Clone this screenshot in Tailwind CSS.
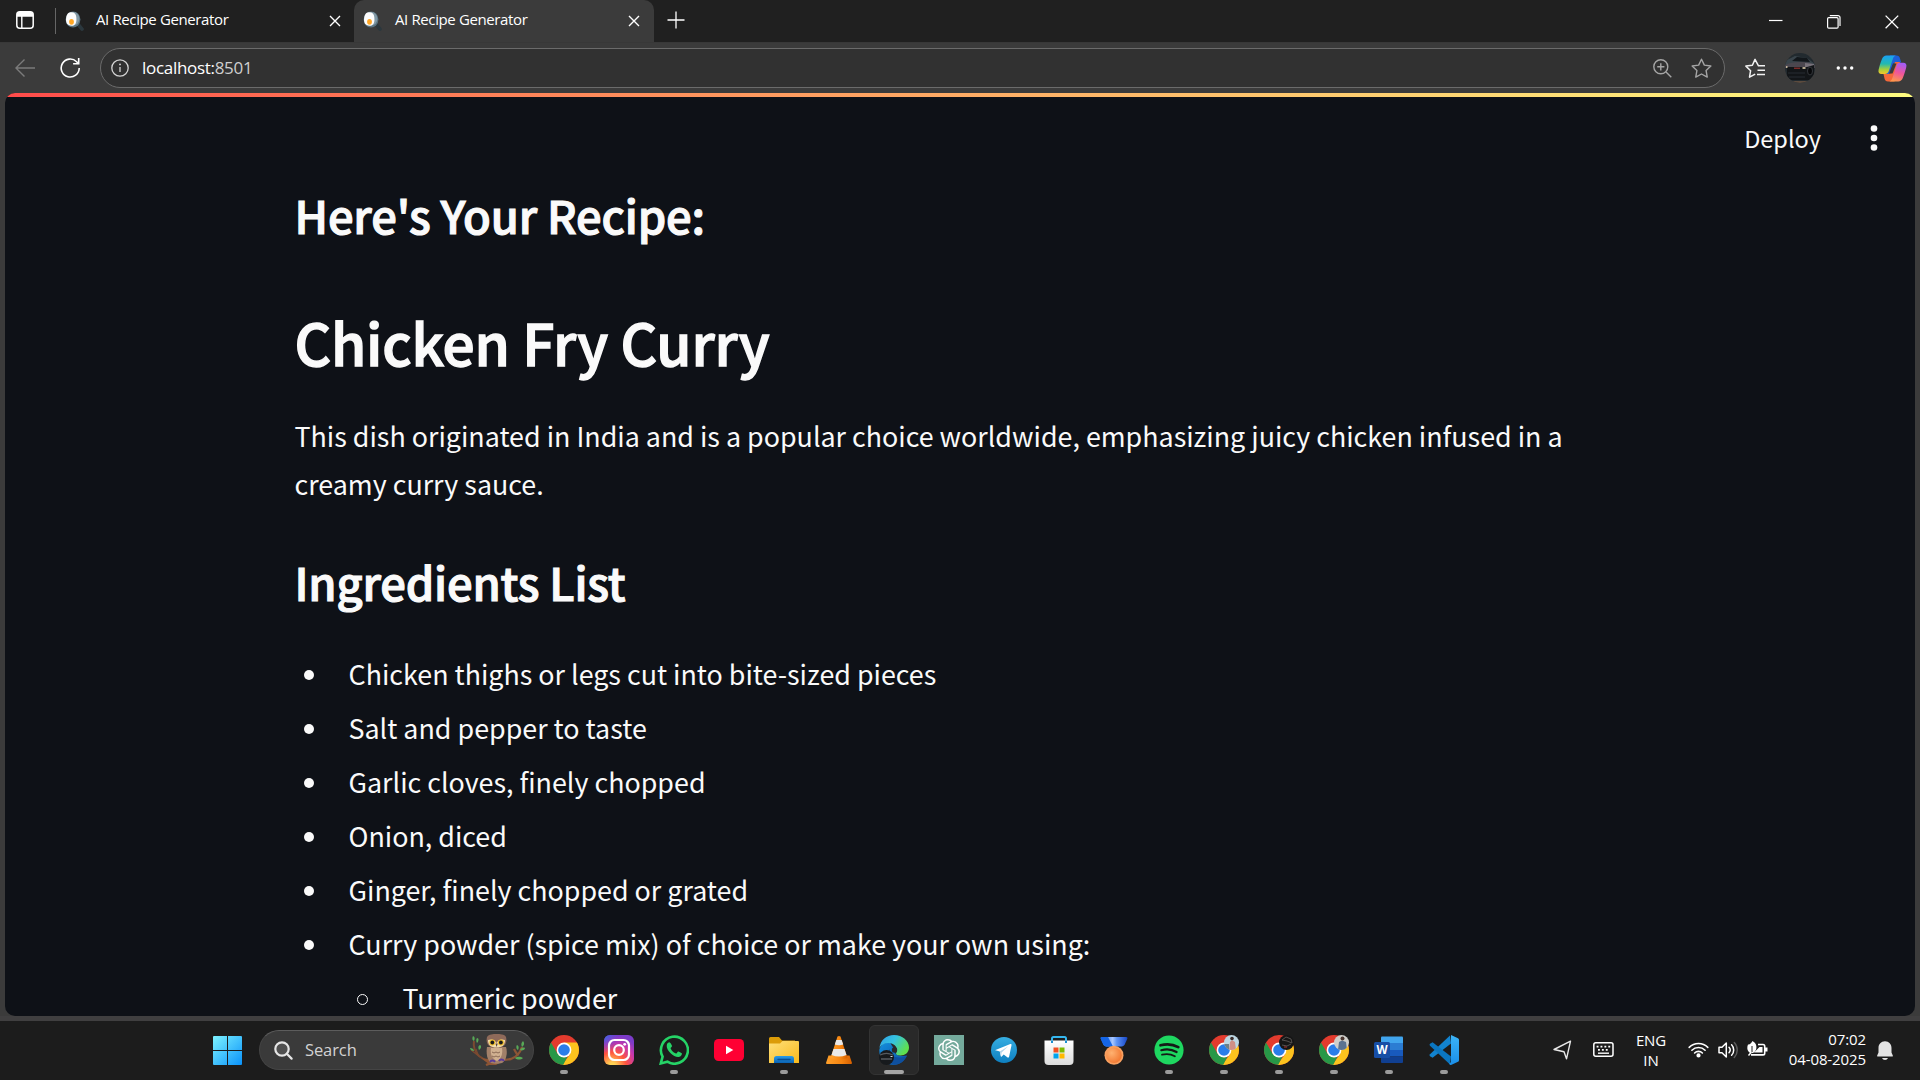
<!DOCTYPE html>
<html lang="en">
<head>
<meta charset="utf-8">
<title>AI Recipe Generator</title>
<script src="https://cdn.jsdelivr.net/npm/@tailwindcss/browser@4"></script>
</head>
<body class="h-[1080px] w-[1920px] overflow-hidden bg-[#3b3b3b] font-['Open_Sans','Noto_Sans',sans-serif] text-white">

<svg class="absolute h-0 w-0" aria-hidden="true">
  <defs>
    <linearGradient id="gWin" x1="0" y1="0" x2="1" y2="1"><stop offset="0" stop-color="#7df3ff"/><stop offset="1" stop-color="#0a92fa"/></linearGradient>
    <radialGradient id="gInsta" cx=".27" cy="1.05" r="1.05"><stop offset="0" stop-color="#ffdd55"/><stop offset=".12" stop-color="#ffd054"/><stop offset=".45" stop-color="#ff543e"/><stop offset=".75" stop-color="#c837ab"/><stop offset="1" stop-color="#7c3bc9"/></radialGradient>
    <radialGradient id="gInsta2" cx="0" cy="0" r=".6"><stop offset="0" stop-color="#3771e8"/><stop offset="1" stop-color="#6a2fd0" stop-opacity="0"/></radialGradient>
    <linearGradient id="gFolder" x1="0" y1="0" x2="1" y2="1"><stop offset="0" stop-color="#ffe07a"/><stop offset="1" stop-color="#f8b91c"/></linearGradient>
    <linearGradient id="gFolderBlue" x1="0" y1="0" x2="0" y2="1"><stop offset="0" stop-color="#2a9be6"/><stop offset="1" stop-color="#0a63b4"/></linearGradient>
    <linearGradient id="gEdgeTop" x1="0" y1="0" x2="1" y2=".5"><stop offset="0" stop-color="#2f9fe8"/><stop offset=".5" stop-color="#35c3e0"/><stop offset="1" stop-color="#5fe04e"/></linearGradient>
    <linearGradient id="gEdgeLow" x1="0" y1="0" x2="1" y2="1"><stop offset="0" stop-color="#1390e0"/><stop offset="1" stop-color="#0c4c9c"/></linearGradient>
    <linearGradient id="gTele" x1="0" y1="0" x2="0" y2="1"><stop offset="0" stop-color="#36aee2"/><stop offset="1" stop-color="#0e7fc0"/></linearGradient>
    <linearGradient id="gStore" x1="0" y1="0" x2="0" y2="1"><stop offset="0" stop-color="#ffffff"/><stop offset="1" stop-color="#dcdcdc"/></linearGradient>
    <radialGradient id="gMedal" cx=".35" cy=".35" r=".8"><stop offset="0" stop-color="#ffb271"/><stop offset="1" stop-color="#f07028"/></radialGradient>
    <linearGradient id="gRibbon" x1="0" y1="0" x2="1" y2="0"><stop offset="0" stop-color="#1267e8"/><stop offset=".45" stop-color="#a9c7ff"/><stop offset=".6" stop-color="#5f95f5"/><stop offset="1" stop-color="#1747c8"/></linearGradient>
    <linearGradient id="gCopA" x1="0" y1="0" x2="0" y2="1"><stop offset="0" stop-color="#1aa0f5"/><stop offset=".45" stop-color="#22b9b0"/><stop offset=".75" stop-color="#a8cf3a"/><stop offset="1" stop-color="#f5c52a"/></linearGradient>
    <linearGradient id="gCopB" x1=".6" y1="0" x2=".3" y2="1"><stop offset="0" stop-color="#a45cf5"/><stop offset=".5" stop-color="#f0559a"/><stop offset="1" stop-color="#ff9a4a"/></linearGradient>
    <linearGradient id="gCone" x1="0" y1="0" x2="1" y2="0"><stop offset="0" stop-color="#ffa02a"/><stop offset=".6" stop-color="#f58410"/><stop offset="1" stop-color="#d55f00"/></linearGradient>
    <linearGradient id="gVs" x1="0" y1="0" x2="0" y2="1"><stop offset="0" stop-color="#3cb4f7"/><stop offset="1" stop-color="#1a8fe8"/></linearGradient>
    <clipPath id="cAv"><circle cx="15" cy="15" r="15"/></clipPath>
    <clipPath id="cChrome"><circle cx="15" cy="15" r="15"/></clipPath>
    <clipPath id="cBadge"><circle cx="22.5" cy="7.5" r="7.5"/></clipPath>

    <symbol id="pan" viewBox="0 0 20 20">
      <path d="M14 14.500l3 3.600" stroke="#2b373d" stroke-width="3.600" stroke-linecap="round"/>
      <ellipse cx="8" cy="8.500" rx="7.400" ry="8" fill="#5a7482"/>
      <ellipse cx="8.600" cy="7.800" rx="5.800" ry="6.700" fill="#8299a5"/>
      <path d="M4.500 1.400C8.500.4 11 2.500 11.300 6c.3 3 .4 6.600-2.300 8.200C6.500 15.600 2 14.500 1.300 11 .7 8 1.200 2.500 4.500 1.400z" fill="#fdfdfd"/>
      <ellipse cx="6.500" cy="10.800" rx="2.400" ry="2.900" fill="#ffa726"/>
    </symbol>
    <symbol id="close" viewBox="0 0 12 12"><path d="M1 1l10 10M11 1L1 11" stroke="#fff" stroke-width="1.400" fill="none"/></symbol>
    <symbol id="chrome" viewBox="0 0 30 30">
      <g clip-path="url(#cChrome)">
        <rect width="30" height="30" fill="#e33b2e"/>
        <path d="M15 7.600H31V31H12.500L21.400 18.700z" fill="#fcc31e"/>
        <path d="M0 4L2 7.500 8.600 18.700 15 22.400 18.500 21.500 13.600 31H-2z" fill="#279847"/>
      </g>
      <circle cx="15" cy="15" r="7.400" fill="#fff"/><circle cx="15" cy="15" r="5.800" fill="#2a7de9"/>
    </symbol>
  </defs>
</svg>

<div class="flex h-full flex-col">

  <!-- tab strip -->
  <header class="flex h-[42px] shrink-0 items-stretch bg-[#202020] text-[15px] tracking-[-0.38px]">
    <div class="flex w-[354px] items-center pl-4 pr-[13px]">
      <svg class="-mt-0.5 h-[18px] w-[18px]" viewBox="0 0 18 18"><rect x=".8" y=".8" width="16.400" height="16.400" rx="3" fill="none" stroke="#fff" stroke-width="1.500"/><path d="M1 3a2 2 0 012-2h12a2 2 0 012 2v2.800H1z" fill="#fff"/><path d="M5.800 5v12" stroke="#fff" stroke-width="1.400"/></svg>
      <span class="ml-[21px] h-[26px] w-px bg-[#666]"></span>
      <svg class="ml-[9px] h-5 w-5"><use href="#pan"/></svg>
      <span class="ml-[11px] mt-[-3px] whitespace-nowrap">AI Recipe Generator</span>
      <svg class="ml-auto h-3 w-3"><use href="#close"/></svg>
    </div>
    <div class="flex w-[300px] items-center rounded-t-[10px] bg-[#3b3b3b] pl-[9px] pr-[14px]">
      <svg class="h-5 w-5"><use href="#pan"/></svg>
      <span class="ml-3 mt-[-3px] whitespace-nowrap">AI Recipe Generator</span>
      <svg class="ml-auto h-3 w-3"><use href="#close"/></svg>
    </div>
    <svg class="ml-[13px] mt-[11px] h-[18px] w-[18px]" viewBox="0 0 18 18"><path d="M9 .5v17M.5 9h17" stroke="#fff" stroke-width="1.300"/></svg>
    <div class="ml-auto mt-[15px] flex h-[14px] gap-[44px] pr-[21px]">
      <svg class="h-[14px] w-[14px]" viewBox="0 0 14 14"><path d="M0 5.500h13.500" stroke="#fff" stroke-width="1.200"/></svg>
      <svg class="h-[14px] w-[14px]" viewBox="0 0 14 14" fill="none" stroke="#fff" stroke-width="1.200"><rect x=".6" y="2.600" width="10.500" height="10.500" rx="1.200"/><path d="M2.800.6h8.200a2 2 0 012 2v8.500"/></svg>
      <svg class="h-[14px] w-[14px]" viewBox="0 0 14 14"><path d="M.6.600l12.600 12.600M13.200.6L.6 13.200" stroke="#fff" stroke-width="1.300"/></svg>
    </div>
  </header>

  <!-- address bar -->
  <div class="flex h-[51px] shrink-0 items-center border-t border-[#383838] pl-[15px] pr-[12px]">
    <svg class="h-[20px] w-[20px]" viewBox="0 0 20 20" fill="none" stroke="#7b7b7b" stroke-width="1.400"><path d="M.8 10H20M9.500 1.500L.9 10l8.600 8.500"/></svg>
    <svg class="ml-[25px] h-[22px] w-[21px]" viewBox="0 0 21 22" fill="none" stroke="#fff" stroke-width="1.600"><path d="M19.200 11a9 9 0 11-2.600-6.300l1.900 2"/><path d="M18.700 1v5.800h-5.600"/></svg>
    <div class="ml-[19px] flex h-10 w-[1625px] items-center rounded-full border border-[#6b6b6b] bg-[#313131] pl-[10px] pr-[12px]">
      <svg class="h-[18px] w-[18px]" viewBox="0 0 18 18"><circle cx="9" cy="9" r="8.200" fill="none" stroke="#d4d4d4" stroke-width="1.300"/><path d="M9 8v5" stroke="#d4d4d4" stroke-width="1.300"/><circle cx="9" cy="5.400" r=".95" fill="#d4d4d4"/></svg>
      <span class="ml-[13px] mt-[-1px] text-[17px] tracking-[-0.3px]">localhost:<span class="text-[#cfcfcf]">8501</span></span>
      <svg class="ml-auto h-[19px] w-[19px]" viewBox="0 0 19 19" fill="none" stroke="#a5a5a5" stroke-width="1.400"><circle cx="7.800" cy="7.800" r="7"/><path d="M13 13l5.300 5.300M7.800 4.200v7.200M4.200 7.800h7.200"/></svg>
      <svg class="ml-[19px] h-[21px] w-[21px]" viewBox="0 0 21 21" fill="none" stroke="#a5a5a5" stroke-width="1.400" stroke-linejoin="round"><path d="M10.500 1.200l2.850 5.950 6.500.9-4.750 4.550 1.150 6.500-5.750-3.100-5.750 3.100 1.150-6.500L1.150 8.050l6.500-.9z"/></svg>
    </div>
    <svg class="ml-[20px] h-[21px] w-[21px]" viewBox="0 0 21 21" fill="none" stroke="#f2f2f2" stroke-width="1.500" stroke-linejoin="round"><path d="M20 7.800h-6.500L10 1.400 7.400 7.200.9 8.100l4.700 4.600-1.100 6.500 5.700-3"/><path d="M12.500 12.200H20M12 16.600h8" /></svg>
    <svg class="ml-[19px] h-[30px] w-[30px]" viewBox="0 0 30 30"><g clip-path="url(#cAv)"><rect width="30" height="30" fill="#222a2f"/><path d="M0 8L10 3l12 2 8 6v3H0z" fill="#39444b"/><path d="M7 8l5-4 10 1 3 4z" fill="#12171b"/><path d="M0 12c7-4 24-4 30 0v3H0z" fill="#4b474f"/><path d="M20 10l9 1v3l-9 1z" fill="#77727a"/><path d="M2 14h20l7-2v15H2z" fill="#121518"/><path d="M9 15.300h6" stroke="#7a2a28" stroke-width="1.500"/><path d="M17.500 15h3M1 14h1.500" stroke="#e9d9b5" stroke-width="1.400"/><ellipse cx="25" cy="18" rx="2.500" ry="4" fill="#08090b" stroke="#33363b"/><path d="M3 20h17M4 24h16" stroke="#262c32" stroke-width="1.100"/><path d="M0 29h30" stroke="#5c4b3e" stroke-width="2"/></g></svg>
    <svg class="ml-[21px] h-4 w-[18px]" viewBox="0 0 18 16" fill="#fff"><circle cx="2.300" cy="8" r="1.700"/><circle cx="9" cy="8" r="1.700"/><circle cx="15.700" cy="8" r="1.700"/></svg>
    <svg class="ml-[24px] h-[27px] w-[29px]" viewBox="0 0 29 27">
      <path d="M12 .5h6.500c2 0 3 1.200 3.500 3l1.200 4h-4.500c-2.500 0-3.500 1-4.200 3.500L11.500 20c-.7 2-2 3-4 3z" fill="#1d5fd8"/>
      <path d="M16.500 26.500H10c-2 0-3-1.200-3.500-3L5.500 19h4.300c2.400 0 3.400-1 4.100-3.500L17 7h5z" fill="#f4683a"/>
      <path d="M8.500.5H18c-1.800.3-2.600 1.600-3.200 3.500l-4 12c-.7 2-1.900 3-3.800 3H3.500C1 19 0 17.500.6 14.800 1.300 11.500 2.500 7.500 4 4 4.900 1.700 6.300.5 8.500.5z" fill="url(#gCopA)"/>
      <path d="M20.200 26.500h-9c1.800-.3 2.600-1.600 3.200-3.500l4-12c.7-2.200 1.800-3.200 3.700-3.200h3.300c2.500 0 3.500 1.600 2.900 4.300-.7 3.300-2 7.300-3.500 10.900-.9 2.300-2.400 3.500-4.600 3.500z" fill="url(#gCopB)"/>
      <path d="M15 8.500h3.500l-4 10H11z" fill="#3b3b3b"/>
    </svg>
  </div>

  <!-- page -->
  <main class="mx-[5px] flex h-[923px] shrink-0 flex-col overflow-hidden rounded-[10px] bg-[#0e1117] font-['Noto_Sans_CJK_SC',sans-serif] text-[#fafafa]">
    <div class="h-1 shrink-0 bg-gradient-to-r from-[#ff4b4b] to-[#fffd80]"></div>
    <div class="flex h-[87px] shrink-0 items-start justify-end pr-[37px] pt-[23px]">
      <span class="mr-[49px] text-[23.5px] leading-9">Deploy</span>
      <svg class="mt-[5px] h-[26px] w-2" viewBox="0 0 8 26" fill="#fafafa"><circle cx="4" cy="3.500" r="3.300"/><circle cx="4" cy="13" r="3.300"/><circle cx="4" cy="22.500" r="3.300"/></svg>
    </div>
    <article class="w-[1330px] pl-[289.5px] text-[26.85px] leading-[48px]">
      <h3 class="h-[60px] text-[45.3px] font-medium leading-[60px] tracking-[-0.18px] [-webkit-text-stroke:1.100px_#fafafa]">Here's Your Recipe:</h3>
      <h1 class="mt-[57px] h-20 text-[56.8px] font-medium leading-[80px] tracking-[-0.2px] [-webkit-text-stroke:1.400px_#fafafa]">Chicken Fry Curry</h1>
      <p class="mt-[31px] w-[1330px]">This dish originated in India and is a popular choice worldwide, emphasizing juicy chicken infused in a<br>creamy curry sauce.</p>
      <h2 class="mt-[43px] h-[60px] text-[45.3px] font-medium leading-[60px] tracking-[-0.18px] [-webkit-text-stroke:1.100px_#fafafa]">Ingredients List</h2>
      <ul class="mt-[39px] flex w-[1200px] flex-col gap-1.5 pl-[9px]">
        <li class="flex items-center gap-[35px]"><span class="mt-0.5 h-2.5 w-2.5 rounded-full bg-[#fafafa]"></span>Chicken thighs or legs cut into bite-sized pieces</li>
        <li class="flex items-center gap-[35px]"><span class="mt-0.5 h-2.5 w-2.5 rounded-full bg-[#fafafa]"></span>Salt and pepper to taste</li>
        <li class="flex items-center gap-[35px]"><span class="mt-0.5 h-2.5 w-2.5 rounded-full bg-[#fafafa]"></span>Garlic cloves, finely chopped</li>
        <li class="flex items-center gap-[35px]"><span class="mt-0.5 h-2.5 w-2.5 rounded-full bg-[#fafafa]"></span>Onion, diced</li>
        <li class="flex items-center gap-[35px]"><span class="mt-0.5 h-2.5 w-2.5 rounded-full bg-[#fafafa]"></span>Ginger, finely chopped or grated</li>
        <li class="flex items-center gap-[35px]"><span class="mt-0.5 h-2.5 w-2.5 rounded-full bg-[#fafafa]"></span>Curry powder (spice mix) of choice or make your own using:</li>
        <li class="flex items-center gap-[35px] pl-[53px]"><span class="mt-0.5 h-[11px] w-[11px] rounded-full border border-[#fafafa]"></span>Turmeric powder</li>
      </ul>
    </article>
  </main>

  <div class="h-[5px] shrink-0 bg-[#403f40]"></div>

  <!-- taskbar -->
  <footer class="flex h-[59px] shrink-0 items-start bg-[#1c1c1c] pl-[213px] pr-[27px]">
    <svg class="mt-[15px] h-[29px] w-[29px]" viewBox="0 0 29 29" fill="url(#gWin)"><path d="M1 0h13v14H0V1a1 1 0 011-1zM15 0h13a1 1 0 011 1v13H15zM0 15h14v14H1a1 1 0 01-1-1zM15 15h14v13a1 1 0 01-1 1H15z"/></svg>
    <div class="ml-[17px] mt-[9px] flex h-10 w-[275px] items-center rounded-full border border-[#444] border-t-[#5c5c5c] bg-[#3a3a3a] pl-[14px] pr-2">
      <svg class="h-[19px] w-[19px]" viewBox="0 0 19 19" fill="none" stroke="#e6e6e6" stroke-width="2.200"><circle cx="8" cy="8" r="6.700" fill="#505050"/><path d="M12.800 12.800l4.800 4.800" stroke-linecap="round"/></svg>
      <span class="ml-[12px] mt-px text-[16.5px] tracking-[-0.1px] text-[#d2d2d2]">Search</span>
      <svg class="ml-auto h-8 w-[56px]" viewBox="0 0 56 32">
        <path d="M5 7c-1 6 1 11 5 15l11 7" stroke="#7b4a30" stroke-width="2" fill="none"/><path d="M2 16l9 7M7 15l2 6" stroke="#7b4a30" stroke-width="1.200"/>
        <path d="M17 31c9-4 17-5 25-6 6-2 9-6 11-12M45 15l4 7" stroke="#8d5535" stroke-width="2.300" fill="none"/><path d="M12 24l9 7h6l7-4z" fill="#8d5535"/>
        <path d="M4 2c2 1 2 3 1 5-2-1-2-3-1-5zM8 4c2 0 2 3 0 5-1-2-1-4 0-5zM1 14c2 0 4 1 4 3-2 0-4-1-4-3zM11 11c2 1 1 4-1 5-1-2-1-4 1-5zM54 7c2 2 1 5-1 6-1-2-1-4 1-6zM48 11c2 1 2 3 1 5-2-1-2-4-1-5zM46 24c3-2 6-1 8 0-2 2-6 2-8 0zM51 16c1-2 3-3 5-2 0 2-3 3-5 2z" fill="#58a957"/>
        <path d="M18 13h19c2 6 0 14-4 16-3 1-8 1-11 0-4-3-5-10-4-16z" fill="#a28069"/><path d="M22 14h11c1 6-1 11-5 13-5-2-7-7-6-13z" fill="#d0b090"/><path d="M23 18l2 1 2-1 2 1 2-1M23 22l2 1 2-1 2 1 2-1" stroke="#8a6a55" fill="none"/>
        <path d="M18 3c2-3 6-3 9.500-3s8 0 9.500 3c1.500 6-1 11-9.500 11S16.500 9 18 3z" fill="#8e6a5a"/><path d="M19 6c3-1 6.500-1 8.500 3C29.500 5 33 5 36 6c0 5-3 7.500-8.500 7.500S19 11 19 6z" fill="#f3dfb0"/>
        <circle cx="23.300" cy="8.500" r="3" fill="#f2c12f"/><circle cx="31.900" cy="8.500" r="3" fill="#f2c12f"/><circle cx="23.300" cy="8.500" r="1.900" fill="#1b1b1b"/><circle cx="31.900" cy="8.500" r="1.900" fill="#1b1b1b"/><path d="M26.500 9.500h2.200l-1.100 3.500z" fill="#5a4034"/>
        <path d="M21 28c1-2 4-2 5 0M30 27c1-2 4-2 5 0" stroke="#5a3b9a" stroke-width="1.800" fill="none"/>
      </svg>
    </div>

    <nav class="ml-[2px] flex">
      <div class="flex h-[59px] w-[55px] flex-col items-center pt-[14px]"><svg class="h-[30px] w-[30px]"><use href="#chrome"/></svg><i class="mt-[5px] h-1 w-2 rounded-full bg-[#9b9b9b]"></i></div>
      <div class="flex h-[59px] w-[55px] flex-col items-center pt-[14px]"><svg class="h-[30px] w-[30px]" viewBox="0 0 30 30"><rect width="30" height="30" rx="6" fill="url(#gInsta)"/><rect width="30" height="30" rx="6" fill="url(#gInsta2)"/><g fill="none" stroke="#fff" stroke-width="2.200"><rect x="5" y="5" width="20" height="20" rx="5.500"/><circle cx="15" cy="15" r="4.800"/></g><circle cx="20.700" cy="9.300" r="1.400" fill="#fff"/></svg></div>
      <div class="flex h-[59px] w-[55px] flex-col items-center pt-[14px]"><svg class="h-[30px] w-[30px]" viewBox="0 0 30 30"><path d="M1.800 28.400l1.800-6.700A13.500 13.500 0 118.400 26.700z" fill="none" stroke="#25d366" stroke-width="2.600"/><path d="M10.600 7.400c-.6-.2-2.800.6-2.900 3.500-.1 5 7.500 11.700 12 11 2.400-.4 3.300-2 3.200-3.400 0-.4-3.400-2-3.700-2-.6 0-1.400 2.100-2 2-2.200-.5-5.100-3.400-5.600-5.300 0-.6 1.400-1.300 1.400-2.200 0-.7-1.300-3.300-2.400-3.600z" fill="#25d366"/></svg><i class="mt-[5px] h-1 w-2 rounded-full bg-[#9b9b9b]"></i></div>
      <div class="flex h-[59px] w-[55px] flex-col items-center pt-[14px]"><svg class="h-[30px] w-[30px]" viewBox="0 0 30 30"><rect y="4" width="30" height="22" rx="4.500" fill="#ff0033"/><path d="M12 10.800v8.400l7.300-4.200z" fill="#fff"/></svg></div>
      <div class="flex h-[59px] w-[55px] flex-col items-center pt-[14px]"><svg class="h-[30px] w-[30px]" viewBox="0 0 30 30"><path d="M0 10V3.500Q0 2 1.500 2H10l3 3.500h13V10z" fill="#dc9c08"/><path d="M0 8.500h11l2.500-2.500H29q1 0 1 1v21H0z" fill="url(#gFolder)"/><path d="M5 28v-4.500Q5 21 7.500 21h15q2.500 0 2.500 2.500V28z" fill="url(#gFolderBlue)"/><path d="M9 24.500h12" stroke="#084e94" stroke-width="1.300" stroke-linecap="round"/></svg><i class="mt-[5px] h-1 w-2 rounded-full bg-[#9b9b9b]"></i></div>
      <div class="flex h-[59px] w-[55px] flex-col items-center pt-[14px]"><svg class="h-[30px] w-[30px]" viewBox="0 0 30 30"><path d="M4.500 20.500h21L28 28a1 1 0 01-1 1H3a1 1 0 01-1-1z" fill="url(#gCone)"/><path d="M13.500 1.500q1.500-1 3 0L23.500 23q-8.500 3.500-17 0z" fill="url(#gCone)"/><path d="M12.300 5h5.400l1.500 4.600q-4.200 1.500-8.400 0zM9.500 14h11l2 6q-7.500 3-15 0z" fill="#e9e9e9"/></svg></div>
      <div class="flex h-[59px] w-[55px] justify-center pt-1"><div class="flex h-[50px] w-[50px] flex-col items-center rounded-md border border-[#333] bg-[#292929] pt-[9px]"><svg class="h-[30px] w-[30px]" viewBox="0 0 30 30"><path d="M.3 15C1 10 6 7 11 7.500l5 8C15 19 19 22 28 20.500 25 26.500 20.500 30 15 30 7 30 0 24 .3 15z" fill="url(#gEdgeLow)"/><path d="M.4 13C1.500 5 7.500 0 15 0c8.500 0 15 6 15 12.500 0 5-4 8-8.500 8-3 0-4.500-1-4.500-2 0-.8 1-1.500 1-3.500 0-4-4-7-8.500-7C5.500 8 2 10 .4 13z" fill="url(#gEdgeTop)"/><path d="M11 14c-1 5 3 8.500 9 8.500 3 0 6-.5 8-1.500-3 5-7 8.500-13 8.800C9 28 7 19 11 14z" fill="#0e4f9e"/><circle cx="15.500" cy="15" r="2.700" fill="#292929"/><circle cx="7.500" cy="22.500" r="7.500" fill="#171a1d"/><path d="M1 20c4-2 9-2 13 0M2 24h11" stroke="#575b60" stroke-width="1.300" fill="none"/><path d="M11.500 21.500h2" stroke="#ddd"/></svg><i class="mt-[5px] h-1 w-5 rounded-full bg-[#a5a5a5]"></i></div></div>
      <div class="flex h-[59px] w-[55px] flex-col items-center pt-[14px]"><svg class="h-[30px] w-[30px]" viewBox="0 0 30 30"><rect width="30" height="30" fill="#74aa9c"/><g transform="translate(4 4) scale(.917)"><path fill="#fff" d="M22.282 9.821a5.985 5.985 0 0 0-.516-4.910 6.046 6.046 0 0 0-6.510-2.900A6.065 6.065 0 0 0 4.981 4.182a5.985 5.985 0 0 0-3.998 2.900 6.046 6.046 0 0 0 .743 7.097 5.980 5.980 0 0 0 .511 4.911 6.051 6.051 0 0 0 6.515 2.900A5.985 5.985 0 0 0 13.260 24a6.056 6.056 0 0 0 5.772-4.206 5.990 5.990 0 0 0 3.998-2.900 6.056 6.056 0 0 0-.748-7.073zM13.260 22.430a4.476 4.476 0 0 1-2.876-1.041l.142-.080 4.778-2.758a.795.795 0 0 0 .393-.681v-6.737l2.020 1.169a.071.071 0 0 1 .038.052v5.583a4.504 4.504 0 0 1-4.495 4.493zM3.600 18.304a4.471 4.471 0 0 1-.535-3.014l.142.085 4.783 2.758a.771.771 0 0 0 .780 0l5.843-3.368v2.332a.080.080 0 0 1-.033.062L9.740 19.950a4.499 4.499 0 0 1-6.140-1.646zM2.341 7.896a4.485 4.485 0 0 1 2.365-1.973v5.678a.766.766 0 0 0 .388.676l5.815 3.355-2.020 1.168a.076.076 0 0 1-.071 0l-4.830-2.786A4.504 4.504 0 0 1 2.341 7.872zm16.597 3.855l-5.833-3.387L15.119 7.200a.076.076 0 0 1 .071 0l4.830 2.791a4.494 4.494 0 0 1-.676 8.105v-5.678a.790.790 0 0 0-.407-.667zm2.010-3.023l-.141-.085-4.774-2.782a.776.776 0 0 0-.785 0L9.409 9.230V6.897a.066.066 0 0 1 .028-.061l4.830-2.787a4.499 4.499 0 0 1 6.680 4.660zM8.307 12.863l-2.020-1.164a.080.080 0 0 1-.038-.057V6.075a4.499 4.499 0 0 1 7.376-3.454l-.142.081L8.704 5.460a.795.795 0 0 0-.393.681zm1.097-2.365l2.602-1.500 2.607 1.500v2.999l-2.597 1.500-2.607-1.500z"/></g></svg></div>
      <div class="flex h-[59px] w-[55px] flex-col items-center pt-[14px]"><svg class="h-[30px] w-[30px]" viewBox="0 0 30 30"><circle cx="15" cy="15" r="13" fill="url(#gTele)"/><path d="M6.500 14.900L21.300 9c.8-.3 1.400.2 1.200 1.200l-2.400 11.500c-.2.900-.8 1.100-1.500.7l-3.900-2.900-2 1.900c-.5.400-.9.300-1-.3l-.9-4.500-4.200-1.300c-.7-.2-.6-.4-.1-.4z" fill="#fff"/><path d="M10.800 16.600l8.500-5.300-6.700 6.300-.5 3.400z" fill="#b5d6ea"/></svg></div>
      <div class="flex h-[59px] w-[55px] flex-col items-center pt-[14px]"><svg class="h-[30px] w-[30px]" viewBox="0 0 30 30"><path d="M8 7V3.500Q8 2 9.500 2h11Q22 2 22 3.500V7" fill="none" stroke="#35b7ef" stroke-width="2"/><path d="M.5 5.500h29V26q0 4-4 4h-21q-4 0-4-4z" fill="url(#gStore)"/><path d="M8 5.500V8M22 5.500V8" stroke="#1d8fd0" stroke-width="2"/><path d="M9.500 12.500h5v5h-5z" fill="#f25022"/><path d="M15.500 12.500h5v5h-5z" fill="#7fba00"/><path d="M9.500 18.500h5v5h-5z" fill="#00a4ef"/><path d="M15.500 18.500h5v5h-5z" fill="#ffb900"/></svg></div>
      <div class="flex h-[59px] w-[55px] flex-col items-center pt-[14px]"><svg class="h-[30px] w-[30px]" viewBox="0 0 30 30"><path d="M3 2h24q2 0 1.200 2l-2.500 5.500Q25 11 23 11.500H7Q5 11 4.300 9.500L1.800 4Q1 2 3 2z" fill="url(#gRibbon)"/><path d="M3 2h6l5 9.500H7Q5 11 4.300 9.500L1.800 4Q1 2 3 2z" fill="#1565e6"/><circle cx="15" cy="20.300" r="9.500" fill="#f8a060"/><circle cx="15" cy="20.300" r="7.800" fill="url(#gMedal)"/></svg></div>
      <div class="flex h-[59px] w-[55px] flex-col items-center pt-[14px]"><svg class="h-[30px] w-[30px]" viewBox="0 0 30 30"><circle cx="15" cy="15" r="14.600" fill="#1ed760"/><g fill="none" stroke="#151a17" stroke-linecap="round"><path d="M6.500 10.300c6-1.700 12.600-1.100 17.800 1.900" stroke-width="2.700"/><path d="M7.300 15.200c5.200-1.500 10.700-.9 15.300 1.800" stroke-width="2.200"/><path d="M8 19.700c4.500-1.200 9-.7 12.900 1.600" stroke-width="1.800"/></g></svg><i class="mt-[5px] h-1 w-2 rounded-full bg-[#9b9b9b]"></i></div>
      <div class="flex h-[59px] w-[55px] flex-col items-center pt-[14px]"><svg class="h-[30px] w-[30px]" viewBox="0 0 30 30"><use href="#chrome"/><g clip-path="url(#cBadge)"><path d="M15 0h15v15H15z" fill="#bdd6e2"/><path d="M20 15l1-8 2-2 3 2 1 8z" fill="#d08f86"/><circle cx="23" cy="3.500" r="1.800" fill="#3a2c2a"/><path d="M15 9h5v6h-5z" fill="#6d7f88"/></g></svg><i class="mt-[5px] h-1 w-2 rounded-full bg-[#9b9b9b]"></i></div>
      <div class="flex h-[59px] w-[55px] flex-col items-center pt-[14px]"><svg class="h-[30px] w-[30px]" viewBox="0 0 30 30"><use href="#chrome"/><g clip-path="url(#cBadge)"><path d="M15 0h15v15H15z" fill="#161616"/><path d="M18 5l4-3 5 2 1 4-5-2zM18 10l5 1 4-2" stroke="#55504f" fill="none"/><path d="M20 12h3" stroke="#a33"/></g></svg><i class="mt-[5px] h-1 w-2 rounded-full bg-[#9b9b9b]"></i></div>
      <div class="flex h-[59px] w-[55px] flex-col items-center pt-[14px]"><svg class="h-[30px] w-[30px]" viewBox="0 0 30 30"><use href="#chrome"/><g clip-path="url(#cBadge)"><path d="M15 0h15v15H15z" fill="#cfcfcb"/><path d="M19 15l1-8 3-1.500L27 7l1 8z" fill="#5b7391"/><circle cx="23.500" cy="3.500" r="2" fill="#4a3630"/></g></svg><i class="mt-[5px] h-1 w-2 rounded-full bg-[#9b9b9b]"></i></div>
      <div class="flex h-[59px] w-[55px] flex-col items-center pt-[14px]"><svg class="h-[30px] w-[30px]" viewBox="0 0 30 30"><path d="M7 8V2.500Q7 1.500 8 1.500h20q1 0 1 1V8z" fill="#41a5ee"/><path d="M7 8h22v7H7z" fill="#2b7cd3"/><path d="M7 15h22v6.500H7z" fill="#185abd"/><path d="M7 21.500h22V27q0 1-1 1H8q-1 0-1-1z" fill="#103f91"/><rect y="7" width="16" height="16" rx="1.500" fill="#174ea6"/><text x="8" y="19" text-anchor="middle" fill="#fff" class="font-['Open_Sans',sans-serif] text-[11.5px] font-bold">W</text></svg><i class="mt-[5px] h-1 w-2 rounded-full bg-[#9b9b9b]"></i></div>
      <div class="flex h-[59px] w-[55px] flex-col items-center pt-[14px]"><svg class="h-[30px] w-[30px]" viewBox="0 0 30 30"><path d="M22 8.500L3.600 22.800 1 21.200q-1-1 0-2L21 .600z" fill="#1283cf"/><path d="M22 21.500L3.600 7.200 1 8.800q-1 1 0 2L21 29.400z" fill="#0b76c0"/><path d="M22 0l7 3.200q1 .5 1 1.600v20.400q0 1.100-1 1.600L22 30q-1 .1-1-.600l1-.900z" fill="url(#gVs)"/><path d="M22 0v30l-2-1 2-2z" fill="url(#gVs)"/></svg><i class="mt-[5px] h-1 w-2 rounded-full bg-[#9b9b9b]"></i></div>
    </nav>

    <div class="ml-auto flex h-[59px] items-start text-[15px] leading-5 tracking-[-0.1px]">
      <svg class="mt-[19px] h-5 w-[19px]" viewBox="0 0 19 20" fill="none" stroke="#e8e8e8" stroke-width="1.400" stroke-linejoin="round"><path d="M17.500 1.200L1 9.500l10 2.300 2.500 7z"/></svg>
      <svg class="ml-[21px] mt-[21px] h-[15px] w-[21px]" viewBox="0 0 21 15"><rect x=".8" y=".8" width="19.200" height="13.400" rx="2" fill="none" stroke="#fff" stroke-width="1.500"/><g stroke="#fff" fill="none" stroke-width="1.900"><path d="M3.600 4.600h14" stroke-dasharray="1.900 2"/><path d="M5 7.900h11" stroke-dasharray="1.900 2"/><path d="M5 11.200h11" stroke-width="1.400"/></g></svg>
      <div class="ml-[21px] mt-[9px] w-[32px] text-center">ENG<br>IN</div>
      <svg class="ml-[21px] mt-5 h-[17px] w-[21px]" viewBox="0 0 21 17" fill="none" stroke="#fff" stroke-width="1.600" stroke-linecap="round"><path d="M1.200 6.400a13.200 13.200 0 0118.600 0M3.900 9.200a9.400 9.400 0 0113.200 0M6.600 12a5.600 5.600 0 017.800 0"/><circle cx="10.500" cy="14.400" r="1.300" fill="#fff"/></svg>
      <svg class="ml-[9px] mt-5 h-[18px] w-[21px]" viewBox="0 0 21 18" fill="none" stroke="#fff" stroke-width="1.500" stroke-linejoin="round"><path d="M1 6.300h3l4.300-4.300v14L4 11.700H1z"/><path d="M11 6.300a4 4 0 010 5.400M13.600 3.800a7.500 7.500 0 010 10.400" stroke-linecap="round"/><path d="M16.300 1.600a10.800 10.800 0 010 14.800" stroke="#5a5a5a" stroke-linecap="round"/></svg>
      <svg class="ml-[8px] mt-[18px] h-[19px] w-[21px]" viewBox="0 0 21 19"><path d="M11 5.500h5q1.700 0 1.700 1.700v7q0 1.700-1.700 1.700H4" fill="none" stroke="#fff" stroke-width="1.600"/><path d="M18 8.500h2.500v4H18z" fill="#fff"/><path d="M12.500 8h3v5.500H7z" fill="#fff"/><path d="M1 5.500c2 .3 3-1 4.500-3.500l2 1.500C10 6 10 10 8 12.500c-2 2-5 2-6.500 0C0 10.500 0 8 1 5.500z" fill="#fff"/><path d="M5 7v6l-3.500 3.500" stroke="#1c1c1c" stroke-width="1" fill="none"/><path d="M1.500 16.500l3-3.500" stroke="#fff" stroke-width="1.400"/></svg>
      <div class="ml-[20px] mt-[8px] w-[78px] text-right">07:02<br>04-08-2025</div>
      <svg class="ml-[11px] mt-5 h-[20px] w-[16px]" viewBox="0 0 16 20" fill="#e4e4e4"><path d="M8 .3c-4 0-6.500 3-6.500 6.700v4.500L.2 14.600q-.3 1 .8 1h14q1.100 0 .8-1l-1.300-3.100V7c0-3.700-2.500-6.700-6.500-6.700zM5 17h6q-.8 2-3 2t-3-2z"/></svg>
    </div>
  </footer>
</div>
</body>
</html>
